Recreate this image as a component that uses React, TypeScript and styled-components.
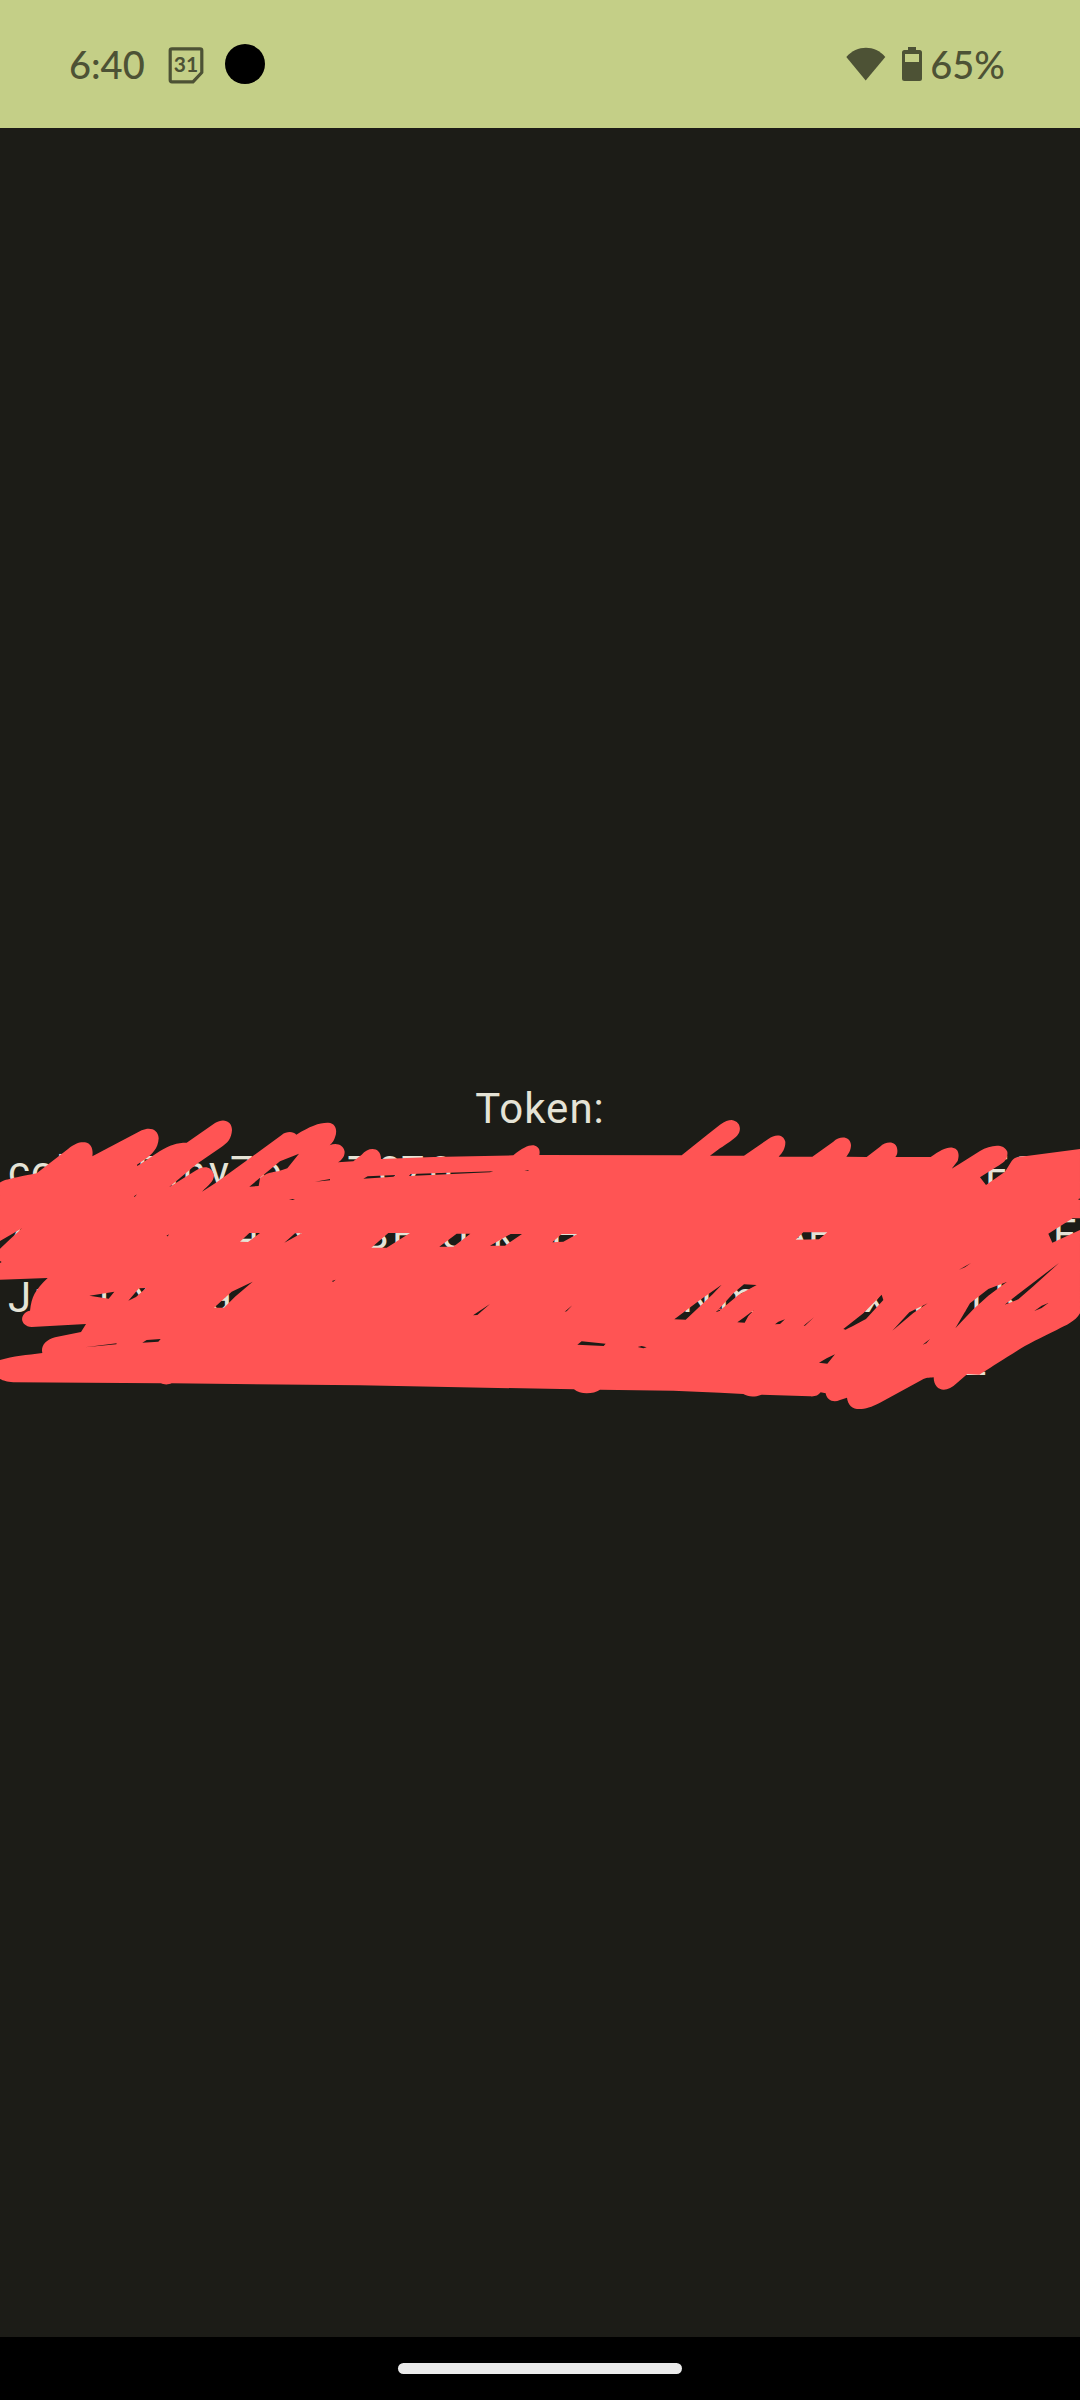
import React from "react";
import styled, { createGlobalStyle } from "styled-components";

const GlobalStyle = createGlobalStyle`
  * { box-sizing: border-box; }
  body { margin: 0; background: #1c1c17; }
`;

const Screen = styled.div`
  display: flex;
  flex-direction: column;
  min-height: 100vh;
  overflow: hidden;
  background: #1c1c17;
  color: #e5e3d6;
  font-family: Roboto, "Liberation Sans", sans-serif;
`;

const StatusBar = styled.header`
  display: flex;
  align-items: center;
  justify-content: space-between;
  height: 128px;
  padding: 0 75px 0 69px;
  background: #c4cf87;
  color: #4d5235;
`;

const StatusGroup = styled.div<{ $gap: number }>`
  display: flex;
  align-items: center;
  gap: ${(p) => p.$gap}px;
`;

const StatusText = styled.span`
  font-family: Lato, "Open Sans", sans-serif;
  font-size: 38px;
  font-weight: 500;
  line-height: 40px;
`;

const CameraHole = styled.div`
  width: 40px;
  height: 40px;
  border-radius: 50%;
  background: #000;
`;

const BatteryGroup = styled.div`
  display: flex;
  align-items: center;
  gap: 8px;
`;

const Content = styled.main`
  display: flex;
  flex: 1;
  flex-direction: column;
  justify-content: center;
`;

const TokenBlock = styled.section`
  position: relative;
  padding-top: 4px;
  font-size: 42px;
  line-height: 63px;
  letter-spacing: 1px;
`;

const Title = styled.h1`
  margin: 0;
  font: inherit;
  text-align: center;
`;

const TokenLine = styled.p`
  display: flex;
  height: 63px;
  margin: 0;
  padding-left: 8px;
  white-space: pre;
`;

const Fragment = styled.span<{ $space: number }>`
  width: 0;
  margin-left: ${(p) => p.$space}px;
`;

const Scribble = styled.svg`
  position: absolute;
  top: -13px;
  left: 0;
  width: 100%;
  height: auto;
  fill: #ff5454;
`;

const NavBar = styled.footer`
  display: flex;
  align-items: center;
  justify-content: center;
  height: 63px;
  background: #000;
`;

const HomeHandle = styled.div`
  width: 284px;
  height: 11px;
  border-radius: 6px;
  background: #ebebeb;
`;

type Piece = [space: number, text: string];

const lines: Piece[][] = [
  [[0, "co"], [48, "l"], [81, "F"], [32, "m"], [40, "y"], [21, "7"], [28, "o"], [89, "7"], [31, "0"], [23, "7"], [28, "0"], [556, "F"], [26, "S"]],
  [[0, "/"], [229, "4"], [51, "Y"], [75, "S"], [29, "F"], [49, "U"], [52, "k"], [58, "H"], [229, "A"], [28, "E"], [245, "F"]],
  [[0, "J"], [26, "r"], [65, "l"], [30, "X"], [80, "a"], [260, "/"], [213, "N"], [37, "m"], [145, "x"], [44, "v"], [50, "n"], [36, "K"], [58, "r"]],
  [[955, "2"]],
];

const outline =
  "M0 368C10 360 30 356 110 340L205 266C225 250 240 245 255 247C275 250 280 270 277 289L425 211C450 200 475 208 476 235C475 265 455 285 435 298L411 314L412 318L480 273C510 255 530 248 560 248L645 189C670 173 696 183 696 210C694 235 685 248 660 264L590 312L507 382L585 333C610 315 635 318 642 345C642 365 625 375 606 395L650 367L845 225C860 213 880 214 889 224C930 198 960 187 985 188C1010 190 1012 215 1005 232C1000 247 993 252 989 256C1010 247 1030 255 1034 275C1034 290 1025 300 1014 307L1060 304L1085 284C1105 260 1143 260 1143 297L1300 291L1540 286C1570 262 1590 253 1605 257C1620 262 1620 275 1618 285L2045 286L2120 226L2160 194C2175 184 2185 180 2195 180C2215 183 2222 198 2219 212C2215 228 2205 235 2160 265L2130 287L2232 287L2305 237C2325 222 2350 222 2356 245C2357 265 2347 280 2336 290L2437 290L2500 245C2520 227 2550 228 2553 255C2553 272 2545 282 2539 290L2600 291L2640 260C2660 242 2690 243 2692 270C2693 280 2690 288 2686 291L2792 291C2820 272 2840 260 2858 263C2880 267 2877 290 2873 303L2855 326L2877 313L2940 273C2970 256 3010 248 3022 275C3025 300 3010 308 2990 320L2940 352L2958 375L3015 335L3035 303C3045 290 3060 290 3080 288L3240 267V475H3218L3145 521L3157 548L3240 510V760C3225 785 3200 795 3170 810C3120 835 3075 855 3040 880C2990 910 2970 925 2938 944L2902 942L2870 970C2840 1000 2802 995 2801 952C2785 954 2780 952 2765 960L2640 1028C2580 1060 2545 1050 2541 1013L2520 1020C2500 1030 2480 1020 2477 1000L2462 997C2455 1007 2445 1010 2430 1009L2285 1004C2260 1013 2245 1010 2230 1002L2160 998L2020 992L1800 989C1780 1003 1740 1004 1722 988L1080 976L515 970C505 975 490 974 483 970L40 967C20 965 10 962 0 957V900C40 888 80 885 127 879C122 860 135 840 165 832L243 816L258 792L95 801C70 800 60 780 70 765C76 755 85 752 90 752C95 710 105 690 143 654L0 659V566L30 538L66 505L0 543Z";

const gaps =
  "M748 380L840 304L897 281L862 325L835 334C815 337 800 338 780 355L776 378ZM945 365L990 357L990 361ZM720 545L748 519H780L744 546ZM853 548L885 520L906 519ZM268 707L343 695L326 716ZM385 722L417 685L438 684L408 711ZM642 743L695 695L758 665L705 710L672 743ZM255 862L350 850L349 853ZM427 848L440 840L482 837L475 845ZM867 417L885 417L878 420ZM402 409L411 403L404 411ZM499 528L506 523L504 529ZM996 663L1007 659L999 666ZM0 603L5 606L0 609Z" +
  "M1090 356L1103 349L1188 345L1180 350ZM1227 348L1232 342L1480 334L1470 337ZM1573 331L1587 331L1584 333ZM1114 563L1165 519H1230L1160 563ZM1318 560L1370 521H1411L1360 560ZM1470 557L1532 522H1566L1515 557ZM1657 547L1685 522H1732L1690 545ZM1419 766L1470 732L1432 765ZM1694 755L1717 736L1700 754ZM1732 854L1745 844L1817 851L1811 858ZM1913 861L1925 858L1940 862L1930 865Z" +
  "M2023 778L2100 720L2165 674L2138 703L2057 779ZM2147 757L2162 743L2160 752ZM2387 539L2410 517H2482L2457 538ZM2152 752L2200 700L2232 673L2270 675L2215 705L2165 747ZM2212 787L2235 770L2262 750L2245 768L2234 788ZM2325 793L2335 785L2355 778L2340 792ZM2411 797L2442 772L2415 797ZM2530 807L2590 760L2645 704L2650 720L2598 777C2570 792 2550 803 2537 809ZM2677 812L2728 757L2783 730L2740 759ZM2768 854L2790 837L2779 850ZM2866 805L2910 730L2965 687L3020 666L2965 707L2920 748ZM3014 734L3060 698L3177 609L3100 679L3055 718ZM3103 753L3125 737L3145 729L3125 744ZM2877 629L2913 609L2895 622ZM2457 908L2480 895L2505 883L2482 911ZM3234 418L3240 415V420Z";

const TokenText = () => (
  <>
    {lines.map((pieces, row) => (
      <TokenLine key={row}>
        {pieces.map(([space, text], i) => (
          <Fragment key={i} $space={space}>{text}</Fragment>
        ))}
      </TokenLine>
    ))}
  </>
);

export default function App() {
  return (
    <Screen>
      <GlobalStyle />
      <StatusBar>
        <StatusGroup $gap={21}>
          <StatusText>6:40</StatusText>
          <svg width="38" height="40" viewBox="0 0 38 40" aria-label="Calendar" role="img">
            <path d="M6 4.8H34Q35.8 4.8 35.8 6.5V28.5L27 37.8H6Q4.2 37.8 4.2 36V6.5Q4.2 4.8 6 4.8Z" fill="none" stroke="currentColor" strokeWidth="3.2" strokeLinejoin="round" />
            <text x="20" y="28" textAnchor="middle" fontFamily="Lato, sans-serif" fontWeight="700" fontSize="21" fill="currentColor">31</text>
          </svg>
          <CameraHole />
        </StatusGroup>
        <StatusGroup $gap={16}>
          <svg width="40" height="34" viewBox="0 0 40 34" aria-label="Wi-Fi" role="img">
            <path d="M0.3 10C11 -2.2 29 -2.2 39.3 10L19.7 33.5Z" fill="currentColor" />
          </svg>
          <BatteryGroup>
            <svg width="20" height="34" viewBox="0 0 20 34" aria-label="Battery" role="img">
              <path fillRule="evenodd" d="M6 0H14V3H17.5Q20 3 20 5.5V31.5Q20 34 17.5 34H2.5Q0 34 0 31.5V5.5Q0 3 2.5 3H6ZM3 7V15H17V7Z" fill="currentColor" />
            </svg>
            <StatusText>65%</StatusText>
          </BatteryGroup>
        </StatusGroup>
      </StatusBar>
      <Content>
        <TokenBlock>
          <Title>Token:</Title>
          <TokenText />
          <Scribble viewBox="0 0 3240 1060" aria-hidden="true">
            <path fillRule="evenodd" d={outline + gaps} />
          </Scribble>
        </TokenBlock>
      </Content>
      <NavBar>
        <HomeHandle />
      </NavBar>
    </Screen>
  );
}
